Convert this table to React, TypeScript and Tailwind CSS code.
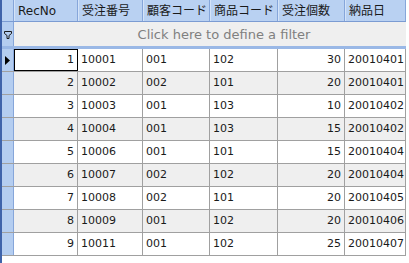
import React from 'react'

const cols = [
  { key: 'rec', label: 'RecNo', w: 'w-[64px]', right: true },
  { key: 'no', label: '受注番号', w: 'w-[65px]' },
  { key: 'cust', label: '顧客コード', w: 'w-[67px]' },
  { key: 'item', label: '商品コード', w: 'w-[68px]' },
  { key: 'qty', label: '受注個数', w: 'w-[67px]', right: true },
  { key: 'date', label: '納品日', w: 'w-[61px]' },
]

const rows = [
  ['1', '10001', '001', '102', '30', '20010401'],
  ['2', '10002', '002', '101', '20', '20010401'],
  ['3', '10003', '001', '103', '10', '20010402'],
  ['4', '10004', '001', '103', '15', '20010402'],
  ['5', '10006', '001', '101', '15', '20010404'],
  ['6', '10007', '002', '102', '20', '20010404'],
  ['7', '10008', '002', '101', '20', '20010405'],
  ['8', '10009', '001', '102', '20', '20010406'],
  ['9', '10011', '001', '102', '25', '20010407'],
]

function FilterIcon() {
  return (
    <svg width="8" height="8" viewBox="0 0 8 8" className="block">
      <path d="M0.5 0.5 H7.5 V2.5 L5 4.5 V7.5 H3 V4.5 L0.5 2.5 Z" fill="none" stroke="#1a1a1a" strokeWidth="1" />
    </svg>
  )
}

function RowArrow() {
  return (
    <svg width="5" height="9" viewBox="0 0 5 9" className="block">
      <path d="M0 0 L5 4.5 L0 9 Z" fill="#000" />
    </svg>
  )
}

export default function App() {
  return (
    <div
      className="w-[409px] h-[263px] overflow-hidden bg-white text-[11px] text-[#1a1a1a] flex"
      style={{ fontFamily: '"DejaVu Sans", "Noto Sans CJK JP", sans-serif' }}
    >
      <div className="w-[406px] shrink-0 border-l-2 border-[#3f63aa] flex flex-col">
        {/* Header */}
        <div className="flex h-[22px] bg-[#b9d1f2] border-b border-[#7b9bd2] text-[12px]">
          <div className="w-[12px] shrink-0 border-r border-[#86a6da]" />
          {cols.map((c) => (
            <div
              key={c.key}
              className={`${c.w} shrink-0 border-r border-[#86a6da] border-l border-l-[#d4e3f8] pl-[3px] flex items-center whitespace-nowrap overflow-hidden`}
            >
              {c.label}
            </div>
          ))}
        </div>

        {/* Filter row */}
        <div className="flex h-[27px] bg-[#efefef] border-b-[3px] border-[#9ab8e6]">
          <div className="w-[12px] shrink-0 bg-[#b4cdf0] border-r border-[#86a6da] flex items-center justify-center pt-[2px]">
            <FilterIcon />
          </div>
          <div className="flex-1 flex items-center justify-center text-[13px] text-[#808080] pt-[1px] pl-[28px]">
            Click here to define a filter
          </div>
        </div>

        {/* Data */}
        {rows.map((r, i) => (
          <div key={i} className={`flex h-[23px] border-b border-[#a0a0a0] ${i % 2 === 1 ? 'bg-[#efefef]' : 'bg-white'}`}>
            <div className="w-[12px] shrink-0 bg-[#b4cdf0] border-r border-[#86a6da] flex items-center pl-[3px]">
              {i === 0 && <RowArrow />}
            </div>
            {cols.map((c, j) => (
              <div
                key={c.key}
                className={`${c.w} shrink-0 border-r border-[#a0a0a0] flex items-center whitespace-nowrap ${
                  c.right ? 'justify-end pr-[3px]' : 'pl-[3px]'
                } ${i === 0 && j === 0 ? 'outline outline-1 outline-black -outline-offset-1 bg-white' : ''}`}
              >
                {r[j]}
              </div>
            ))}
          </div>
        ))}
      </div>
      <div className="flex-1 bg-white" />
    </div>
  )
}
